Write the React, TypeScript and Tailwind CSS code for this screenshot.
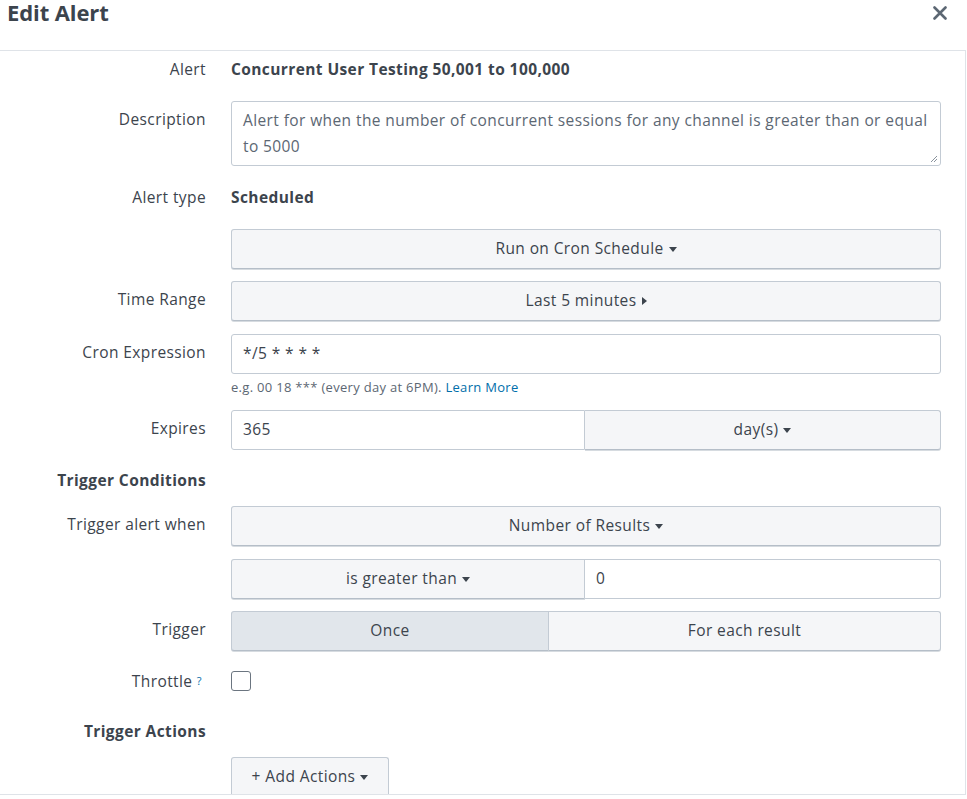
import React from 'react';

const Caret = ({ dir = 'down' }: { dir?: 'down' | 'right' }) =>
  dir === 'down' ? (
    <svg width="8" height="5" viewBox="0 0 8 5" className="ml-[5px] inline-block">
      <path d="M0 0h8L4 5z" fill="#3c444d" />
    </svg>
  ) : (
    <svg width="5" height="8" viewBox="0 0 5 8" className="ml-[5px] inline-block">
      <path d="M0 0l5 4-5 4z" fill="#3c444d" />
    </svg>
  );

function Row({
  label,
  bold,
  className = '',
  labelClass = 'pt-[8px] leading-[20px]',
  children,
}: {
  label?: React.ReactNode;
  bold?: boolean;
  className?: string;
  labelClass?: string;
  children?: React.ReactNode;
}) {
  return (
    <div className={`flex ${className}`}>
      <div className={`w-[206px] shrink-0 text-right ${bold ? 'font-bold' : ''} ${labelClass}`}>{label}</div>
      <div className="ml-[25px] w-[710px] shrink-0">{children}</div>
    </div>
  );
}

const btnBase =
  'h-[40px] flex items-center justify-center border border-[#c3cbd4] border-b-[#b5bec8] shadow-[0_1px_0_#d6dbe0]';
const btn = `${btnBase} bg-[#f5f6f8]`;

export default function App() {
  return (
    <div
      className="w-[967px] h-[799px] bg-white text-[#3c444d] text-[15.5px] tracking-[0.4px] overflow-hidden"
      style={{ fontFamily: '"Open Sans", Lato, sans-serif' }}
    >
      {/* Header */}
      <div className="h-[50px] flex items-start justify-between pl-[7px] pr-[20px]">
        <h1 className="text-[22px] font-bold leading-[24px] tracking-[-0.1px]">Edit Alert</h1>
        <svg width="14" height="14" viewBox="0 0 14 14" className="mt-[6px]">
          <path d="M1.5 1.5l11 11M12.5 1.5l-11 11" stroke="#5c6773" strokeWidth="2.6" strokeLinecap="round" />
        </svg>
      </div>

      {/* Body */}
      <div className="w-[966px] h-[745px] border-t border-r border-b border-[#dfe3e8] overflow-hidden">
        <Row label="Alert" labelClass="leading-[36px]" className="h-[36px]">
          <div className="font-bold leading-[36px]">Concurrent User Testing 50,001 to 100,000</div>
        </Row>

        <Row label="Description" className="mt-[14px]">
          <div className="relative h-[65px] border border-[#c3cbd4] rounded-[3px] px-[11px] pt-[5px] leading-[26px] text-[#5c6773]">
            Alert for when the number of concurrent sessions for any channel is greater than or equal
            <br />
            to 5000
            <svg width="8" height="8" viewBox="0 0 8 8" className="absolute right-[2px] bottom-[2px]">
              <path d="M7 1L1 7M7 4L4 7" stroke="#8a939d" strokeWidth="1" />
            </svg>
          </div>
        </Row>

        <Row label="Alert type" labelClass="leading-[36px]" className="h-[36px] mt-[13px]">
          <div className="font-bold leading-[36px]">Scheduled</div>
        </Row>

        <Row className="mt-[14px]">
          <div className={`${btn} rounded-[3px]`}>
            Run on Cron Schedule <Caret />
          </div>
        </Row>

        <Row label="Time Range" className="mt-[12px]">
          <div className={`${btn} rounded-[3px]`}>
            Last 5 minutes <Caret dir="right" />
          </div>
        </Row>

        <Row label="Cron Expression" className="mt-[13px]">
          <div className="h-[40px] border border-[#c3cbd4] rounded-[3px] px-[11px] flex items-center">*/5 * * * *</div>
          <div className="mt-[5px] text-[13px] tracking-[0.3px] leading-[16px] text-[#5c6773]">
            e.g. 00 18 *** (every day at 6PM). <span className="text-[#006eaa]">Learn More</span>
          </div>
        </Row>

        <Row label="Expires" className="mt-[15px]">
          <div className="flex h-[40px]">
            <div className="w-[354px] border border-[#c3cbd4] rounded-l-[3px] px-[11px] flex items-center">365</div>
            <div className={`${btn} flex-1 border-l-0 rounded-r-[3px]`}>
              day(s) <Caret />
            </div>
          </div>
        </Row>

        <Row label="Trigger Conditions" bold labelClass="leading-[36px]" className="h-[36px] mt-[12px]" />

        <Row label="Trigger alert when" className="mt-[8px]">
          <div className={`${btn} rounded-[3px]`}>
            Number of Results <Caret />
          </div>
        </Row>

        <Row className="mt-[13px]">
          <div className="flex h-[40px]">
            <div className={`${btn} w-[354px] rounded-l-[3px]`}>
              is greater than <Caret />
            </div>
            <div className="flex-1 border border-l-0 border-[#c3cbd4] rounded-r-[3px] px-[11px] flex items-center">0</div>
          </div>
        </Row>

        <Row label="Trigger" className="mt-[12px]">
          <div className="flex h-[40px]">
            <div className={`${btnBase} bg-[#e1e6eb] w-[318px] rounded-l-[3px]`}>Once</div>
            <div className={`${btn} flex-1 border-l-0 rounded-r-[3px]`}>For each result</div>
          </div>
        </Row>

        <Row
          label={
            <span>
              Throttle <sup className="text-[#006eaa] text-[11px] relative -top-[2px]">?</sup>
            </span>
          }
          labelClass="leading-[36px] pr-[4px]"
          className="h-[36px] mt-[12px]"
        >
          <div className="h-[36px] flex items-center">
            <div className="w-[20px] h-[20px] border border-[#6b7580] rounded-[3px]" />
          </div>
        </Row>

        <Row label="Trigger Actions" bold labelClass="leading-[36px]" className="h-[36px] mt-[14px]" />

        <Row className="mt-[8px]">
          <div className={`${btn} w-[158px] rounded-[3px]`}>
            + Add Actions <Caret />
          </div>
        </Row>
      </div>
    </div>
  );
}
